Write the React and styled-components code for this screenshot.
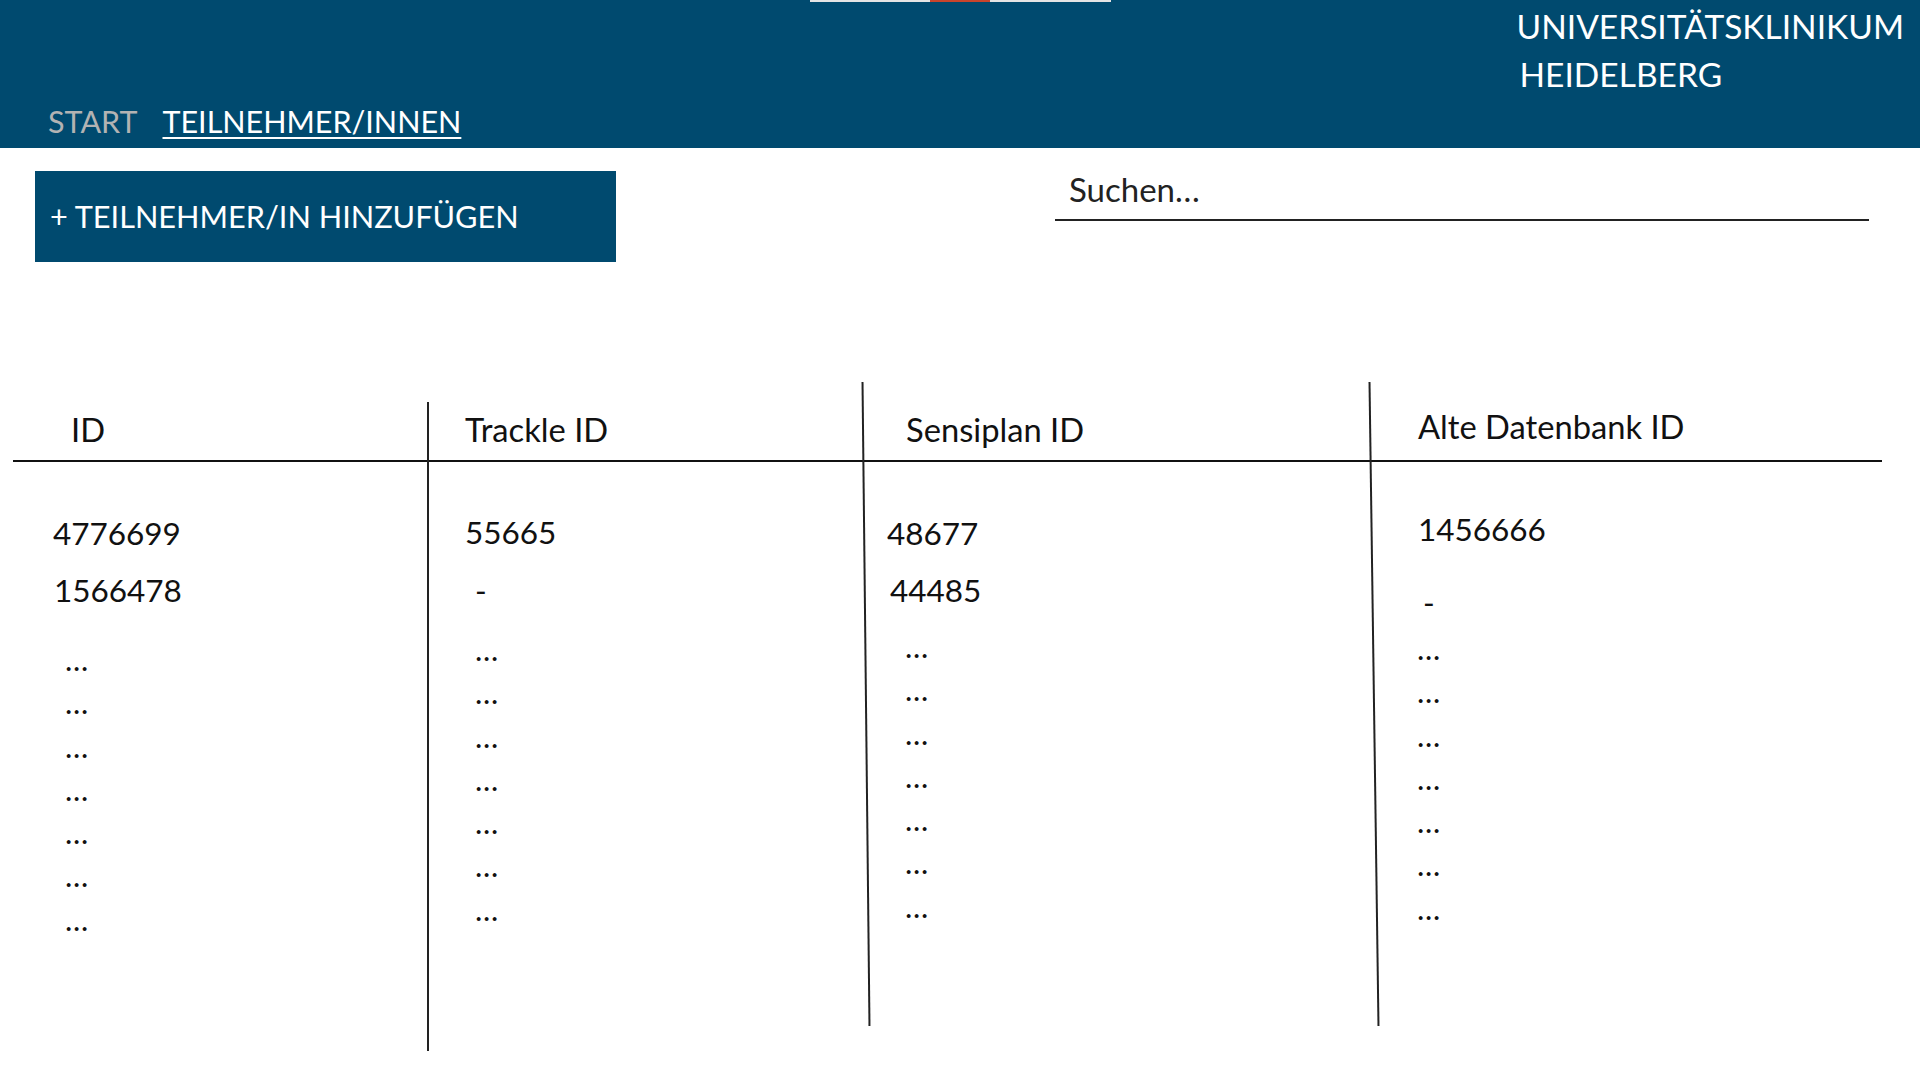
import React from 'react';
import styled, { createGlobalStyle } from 'styled-components';

const GlobalStyle = createGlobalStyle`
  html, body {
    margin: 0;
    padding: 0;
    background: #ffffff;
    font-family: Lato, 'Open Sans', sans-serif;
    color: #111111;
  }
  * { box-sizing: border-box; }
`;

const BLUE = '#004a6f';

const Page = styled.div`
  width: 1920px;
  height: 1080px;
  overflow: hidden;
`;

const Header = styled.header`
  height: 148px;
  background: ${BLUE};
  display: flex;
  flex-direction: column;
`;

const AccentStrip = styled.div`
  align-self: center;
  display: flex;
  height: 2px;
`;

const AccentSeg = styled.div`
  width: ${({ $w }) => $w}px;
  background: ${({ $red }) => ($red ? '#c9442c' : '#e4e4e4')};
`;

const HeaderBody = styled.div`
  flex: 1;
  display: flex;
  justify-content: space-between;
  padding: 0 16px 7px 48px;
`;

const Nav = styled.nav`
  align-self: flex-end;
  display: flex;
  gap: 25px;
`;

const NavLink = styled.a`
  font-size: 30.5px;
  line-height: 40px;
  color: ${({ $active }) => ($active ? '#ffffff' : '#b3b3b3')};
  text-decoration: ${({ $active }) => ($active ? 'underline' : 'none')};
  text-decoration-thickness: 2px;
  text-underline-offset: 4px;
  cursor: pointer;
`;

const Brand = styled.div`
  display: flex;
  flex-direction: column;
  color: #ffffff;
  font-size: 33.5px;
  line-height: 48px;

  span + span { padding-left: 3px; }
`;

const Controls = styled.div`
  display: flex;
  justify-content: space-between;
  align-items: flex-start;
  padding: 18px 51px 0 35px;
`;

const AddButton = styled.button`
  margin-top: 5px;
  width: 581px;
  height: 91px;
  background: ${BLUE};
  border: none;
  color: #ffffff;
  font-family: inherit;
  font-size: 30.7px;
  text-align: left;
  padding: 0 0 0 15px;
  cursor: pointer;
`;

const Search = styled.input`
  width: 814px;
  height: 55px;
  border: none;
  border-bottom: 2px solid #222222;
  padding: 0 0 8px 14px;
  font-family: inherit;
  font-size: 33px;
  color: #222222;
  outline: none;
  background: transparent;

  &::placeholder { color: #222222; }
`;

const Table = styled.div`
  margin: 120px 0 0 13px;
  height: 669px;
  display: grid;
  grid-template-columns: 414px 438px 508px 509px;
`;

const Column = styled.div`
  position: relative;
  display: flex;
  flex-direction: column;
`;

const Divider = styled.div`
  position: absolute;
  left: 0;
  top: ${({ $top }) => $top}px;
  height: ${({ $h }) => $h}px;
  width: 1.5px;
  background: #222222;
  transform: rotate(${({ $tilt }) => $tilt}deg);
  transform-origin: center;
`;

const HeadCell = styled.div`
  height: 80px;
  border-bottom: 2px solid #111111;
  padding: ${({ $y }) => $y}px 0 0 ${({ $x }) => $x}px;
  font-size: 32.7px;
  line-height: 43.5px;
`;

const Value = styled.div`
  font-size: 31.5px;
  line-height: 57px;
  padding-left: ${({ $x }) => $x}px;
  margin-top: ${({ $mt }) => $mt || 0}px;
`;

const Dots = styled.ul`
  list-style: none;
  margin: ${({ $mt }) => $mt}px 0 0;
  padding: 0 0 0 ${({ $x }) => $x}px;
  font-size: 31px;
  line-height: 43.3px;
`;

const columns = [
  {
    title: 'ID', titleX: 58, titleY: 26,
    divider: null,
    values: [{ text: '4776699', x: 40, mt: 43 }, { text: '1566478', x: 41 }],
    dotsX: 52, dotsMt: 19,
  },
  {
    title: 'Trackle ID', titleX: 38, titleY: 26,
    divider: { top: 20, h: 649, tilt: 0 },
    values: [{ text: '55665', x: 38, mt: 42 }, { text: '-', x: 48, mt: 1 }],
    dotsX: 48, dotsMt: 9,
  },
  {
    title: 'Sensiplan ID', titleX: 41, titleY: 26,
    divider: { top: 0, h: 644, tilt: -0.62 },
    values: [{ text: '48677', x: 22, mt: 43 }, { text: '44485', x: 25 }],
    dotsX: 40, dotsMt: 6,
  },
  {
    title: 'Alte Datenbank ID', titleX: 45, titleY: 23,
    divider: { top: 0, h: 644, tilt: -0.8 },
    values: [{ text: '1456666', x: 45, mt: 39 }, { text: '-', x: 50, mt: 16 }],
    dotsX: 44, dotsMt: -4,
  },
];

const DOT_ROWS = 7;

export default function App() {
  return (
    <>
      <GlobalStyle />
      <Page>
        <Header>
          <AccentStrip>
            <AccentSeg $w={120} />
            <AccentSeg $w={60} $red />
            <AccentSeg $w={121} />
          </AccentStrip>
          <HeaderBody>
            <Nav>
              <NavLink>START</NavLink>
              <NavLink $active>TEILNEHMER/INNEN</NavLink>
            </Nav>
            <Brand>
              <span>UNIVERSITÄTSKLINIKUM</span>
              <span>HEIDELBERG</span>
            </Brand>
          </HeaderBody>
        </Header>

        <Controls>
          <AddButton>+ TEILNEHMER/IN HINZUFÜGEN</AddButton>
          <Search placeholder="Suchen…" />
        </Controls>

        <Table>
          {columns.map(col => (
            <Column key={col.title}>
              {col.divider && <Divider $top={col.divider.top} $h={col.divider.h} $tilt={col.divider.tilt} />}
              <HeadCell $x={col.titleX} $y={col.titleY}>{col.title}</HeadCell>
              {col.values.map((v, i) => (
                <Value key={i} $x={v.x} $mt={v.mt}>{v.text}</Value>
              ))}
              <Dots $x={col.dotsX} $mt={col.dotsMt}>
                {Array.from({ length: DOT_ROWS }, (_, i) => <li key={i}>…</li>)}
              </Dots>
            </Column>
          ))}
        </Table>
      </Page>
    </>
  );
}
